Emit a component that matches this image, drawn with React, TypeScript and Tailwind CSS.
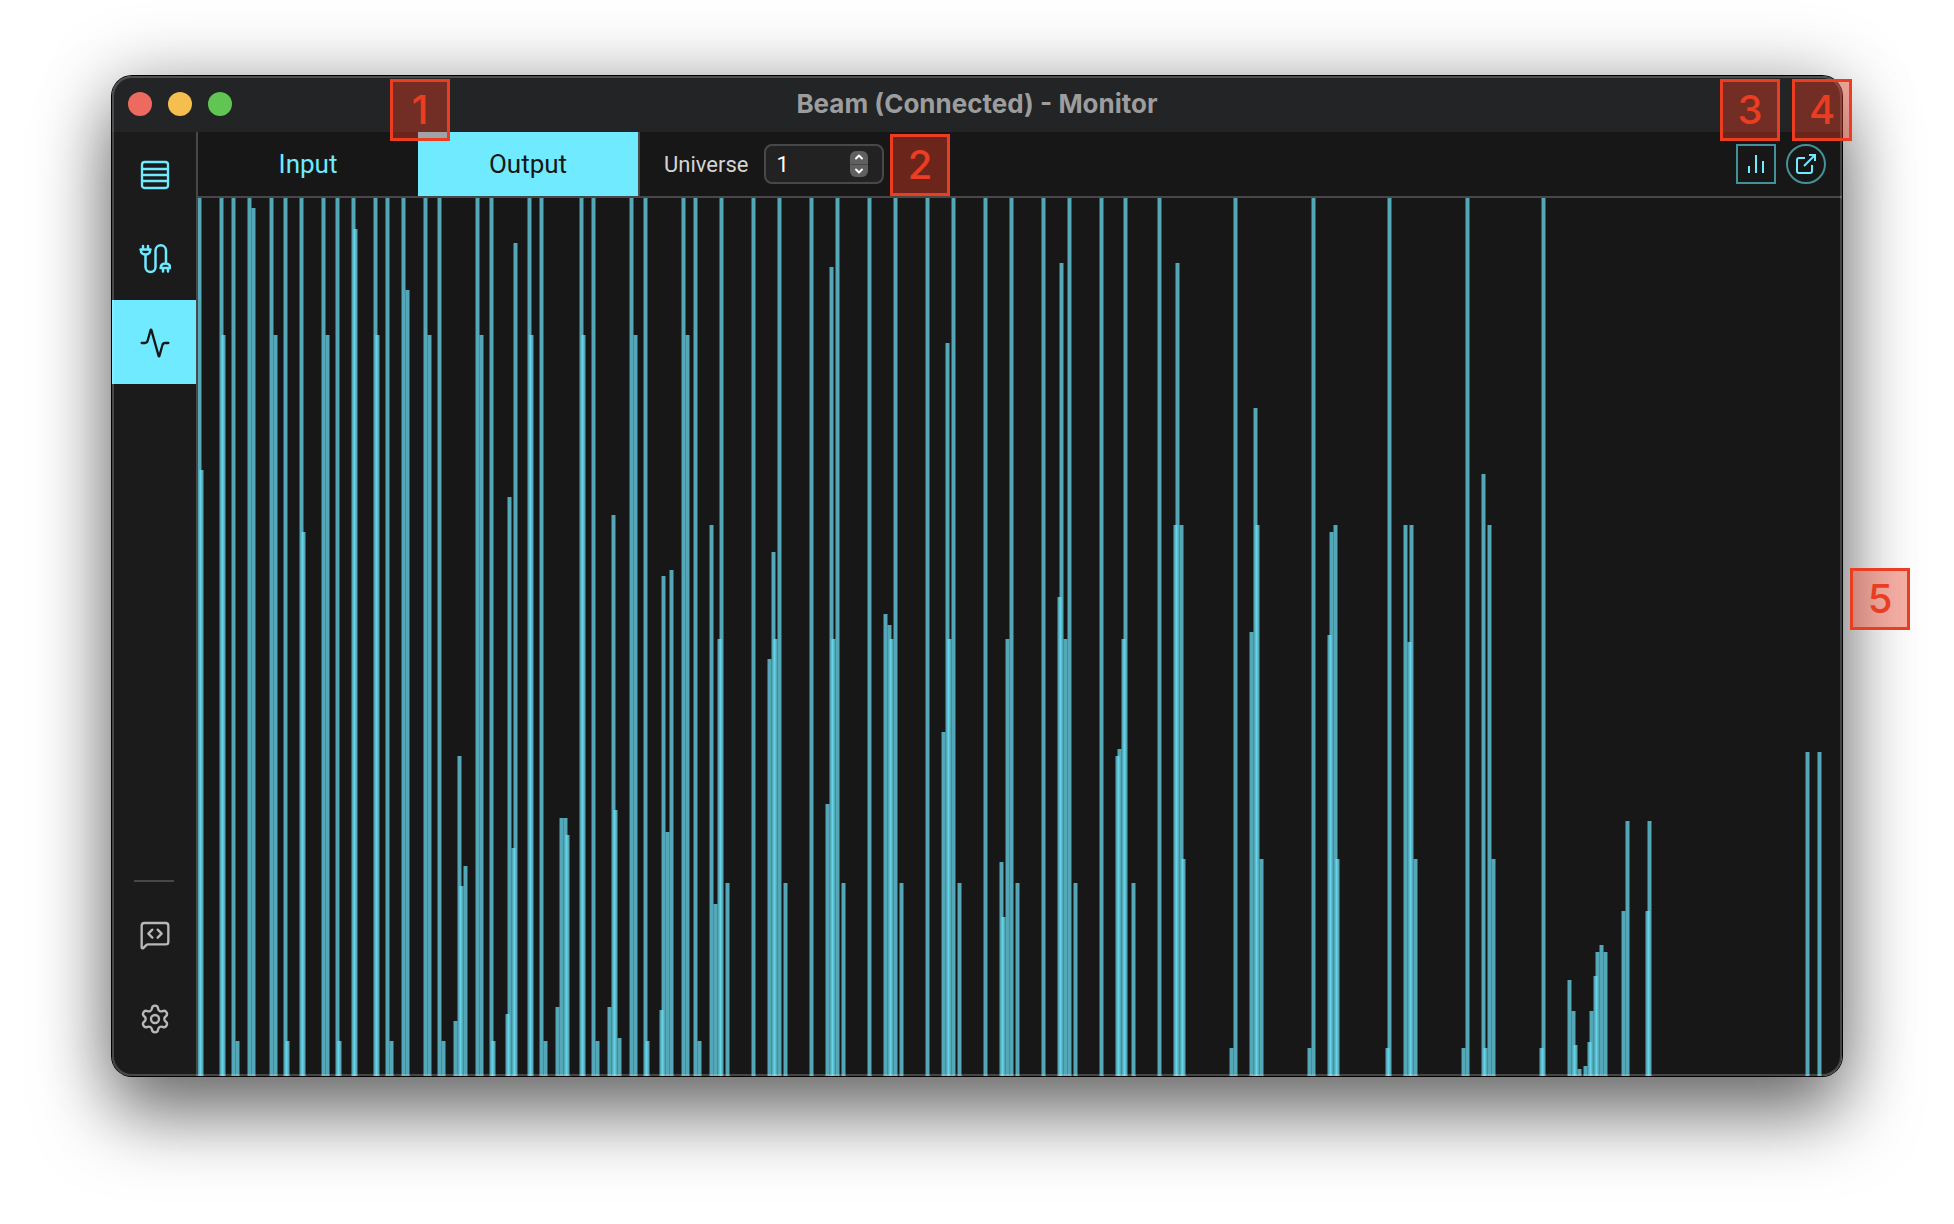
import { useState, type CSSProperties, type ReactNode } from "react";
import { Activity, ChevronDown, ChevronUp, MessageSquareCode, Settings, ExternalLink } from "lucide-react";

// Each entry: [left edge, top edge] of a channel bar, in chart units.
const FULL = 0;
const BARS: [number, number][] = [
  [0, FULL], [2, 272], [22, FULL], [24, 137], [34, FULL], [38, 843], [50, FULL], [54, 10],
  [72, FULL], [76, 137], [86, FULL], [88, 843], [102, FULL], [104, 334], [124, FULL], [128, 137],
  [138, FULL], [140, 843], [154, FULL], [156, 31], [176, FULL], [178, 137], [188, FULL], [192, 843],
  [204, FULL], [208, 92], [226, FULL], [230, 137], [240, FULL], [244, 843],
  [256, 823], [260, 558], [262, 688], [266, 668], [278, FULL], [282, 137], [292, FULL], [294, 843],
  [308, 816], [310, 299], [314, 650], [316, 45], [330, FULL], [332, 137], [342, FULL], [346, 843],
  [358, 809], [362, 620], [366, 620], [368, 637], [382, FULL], [384, 137], [394, FULL], [398, 843],
  [410, 809], [414, 317], [416, 612], [420, 840], [432, FULL], [436, 137], [446, FULL], [448, 843],
  [462, 812], [464, 378], [468, 634], [472, 372], [484, FULL], [488, 137], [496, FULL], [500, 843],
  [512, 327], [516, 706], [520, 441], [522, FULL], [528, 685], [554, FULL],
  [570, 461], [574, 354], [576, 441], [580, FULL], [586, 685], [612, FULL],
  [628, 606], [632, 69], [634, 441], [638, FULL], [644, 685], [670, FULL],
  [686, 416], [690, 427], [692, 441], [696, FULL], [702, 685], [728, FULL],
  [744, 534], [748, 145], [750, 441], [754, FULL], [760, 685], [786, FULL],
  [802, 664], [804, 719], [808, 441], [812, FULL], [818, 685], [844, FULL],
  [860, 399], [862, 65], [866, 441], [870, FULL], [876, 685], [902, FULL],
  [918, 558], [920, 551], [924, 441], [926, FULL], [934, 685], [960, FULL],
  [976, 327], [978, 65], [982, 327], [984, 661], [1032, 850], [1036, FULL],
  [1052, 434], [1056, 210], [1058, 327], [1062, 661], [1110, 850], [1114, FULL],
  [1130, 437], [1132, 334], [1136, 327], [1138, 661], [1188, 850], [1190, FULL],
  [1206, 327], [1210, 444], [1212, 327], [1216, 661], [1264, 850], [1268, FULL],
  [1284, 276], [1286, 850], [1290, 327], [1294, 661], [1342, 850], [1344, FULL],
  [1370, 782], [1374, 813], [1376, 847], [1380, 871], [1386, 868], [1390, 844], [1392, 813],
  [1396, 778], [1398, 754], [1402, 747], [1406, 754], [1424, 713], [1428, 623],
  [1448, 713], [1450, 623], [1608, 554], [1620, 554],
];

function ChannelChart() {
  return (
    <svg
      role="img"
      aria-label="Channel levels"
      viewBox="0 0 1644 878"
      preserveAspectRatio="none"
      className="block h-full w-full"
      fill="#6feaff"
    >
      {BARS.map(([x, y]) => (
        <g key={x}>
          <rect x={x - 1} y={y} width={5} height={878 - y} opacity={0.34} />
          <rect x={x} y={y} width={3} height={878 - y} opacity={0.52} />
        </g>
      ))}
    </svg>
  );
}

const ListIcon = () => (
  <svg viewBox="0 0 24 24" className="size-8" fill="none" stroke="currentColor" strokeWidth={1.75} strokeLinecap="round" strokeLinejoin="round">
    <rect x="2.250" y="2.250" width="19.500" height="19.500" rx="2" />
    <path d="M2.250 7.500h19.500M2.250 12h19.500M2.250 16.500h19.500" />
  </svg>
);

const CableIcon = () => (
  <svg viewBox="0 0 32 32" className="size-8" fill="none" stroke="currentColor" strokeWidth={2.5} strokeLinecap="round" strokeLinejoin="round">
    <path d="M4 3v3.500M9 3v3.500M1.500 6.500h10M2 6.500v1.500a4.500 3.500 0 0 0 9 0V6.500" />
    <path d="M6.500 12V24a5 5 0 0 0 10 0V7.500a5.250 5.250 0 0 1 10.500 0V19" />
    <path d="M22 25v-2a4.750 3.750 0 0 1 9 0V25M21.500 25h10M24 25v3.500M29 25v3.500" />
  </svg>
);

function NavButton({ label, active, muted, children }: { label: string; active?: boolean; muted?: boolean; children: ReactNode }) {
  const tone = active ? "bg-[#6feaff] text-[#171717]" : muted ? "text-[#b8b8b8]" : "text-[#6feaff]";
  return (
    <button type="button" aria-label={label} className={`flex h-21 w-full items-center justify-center pt-0.5 pl-0.5 ${tone}`}>
      {children}
    </button>
  );
}

function Marker({ n, style }: { n: number; style: CSSProperties }) {
  return (
    <span
      style={style}
      className="absolute z-10 flex h-[62px] w-[60px] items-center justify-center border-3 border-[#ea3d22] bg-[#ea3d22]/40 font-['Inter'] text-[40px] font-medium text-[#ea3d22]"
    >
      {n}
    </span>
  );
}

export default function App() {
  const [universe, setUniverse] = useState(1);
  return (
    <div className="h-screen overflow-hidden bg-white px-28 pt-19 pb-37 font-['Roboto',sans-serif]">
      <div className="relative h-full rounded-[20px] shadow-[0_0_0_1px_#000,0_40px_72px_rgba(0,0,0,0.5),0_0_72px_rgba(0,0,0,0.25)]">
        <div className="flex h-full flex-col overflow-hidden rounded-[20px] bg-[#171717]">
          <header className="grid h-14 shrink-0 grid-cols-3 items-center bg-[#222425] px-4">
            <div className="flex gap-4">
              <button type="button" aria-label="Close" className="size-6 rounded-full bg-[#ed6a5e]" />
              <button type="button" aria-label="Minimize" className="size-6 rounded-full bg-[#f5bf4f]" />
              <button type="button" aria-label="Zoom" className="size-6 rounded-full bg-[#61c554]" />
            </div>
            <h1 className="pb-0.5 text-center font-['Inter'] text-[26px] font-bold whitespace-nowrap text-[#9d9d9e]">
              Beam (Connected) - Monitor
            </h1>
          </header>
          <div className="flex min-h-0 flex-1">
            <nav className="flex w-[86px] shrink-0 flex-col items-center border-r-2 border-[#484848] bg-[#1b1b1b] pb-4">
              <NavButton label="Patch"><ListIcon /></NavButton>
              <NavButton label="Connections"><CableIcon /></NavButton>
              <NavButton label="Monitor" active><Activity className="size-8" strokeWidth={1.75} /></NavButton>
              <hr className="mt-auto mb-2.5 w-10 border-t-2 border-[#484848]" />
              <NavButton label="Console" muted><MessageSquareCode className="size-8" strokeWidth={1.75} /></NavButton>
              <NavButton label="Settings" muted><Settings className="size-8" strokeWidth={1.75} /></NavButton>
            </nav>
            <main className="flex min-w-0 flex-1 flex-col">
              <div className="flex h-[66px] shrink-0 items-center border-b-2 border-[#484848] pr-4">
                <div role="tablist" className="flex h-full border-r-2 border-[#484848] text-[26px]">
                  <button type="button" role="tab" aria-selected={false} className="h-full w-55 text-[#6feaff]">Input</button>
                  <button type="button" role="tab" aria-selected className="h-full w-55 bg-[#6feaff] text-[#171717]">Output</button>
                </div>
                <label htmlFor="universe" className="ml-6 text-[22px] text-[#d4d4d4]">Universe</label>
                <div className="ml-4 flex h-10 w-30 items-center justify-between rounded-lg border-2 border-[#484848] bg-[#222] pr-3.5 pl-2.5">
                  <input
                    id="universe"
                    inputMode="numeric"
                    value={universe}
                    onChange={(e) => setUniverse(Number(e.target.value) || 1)}
                    className="w-12 bg-transparent text-[22px] text-white outline-none"
                  />
                  <div className="flex h-[26px] w-[18px] flex-col overflow-hidden rounded-md bg-[#606060] text-white">
                    <button type="button" aria-label="Increase" onClick={() => setUniverse(universe + 1)} className="flex flex-1 items-center justify-center border-b border-[#484848]">
                      <ChevronUp className="size-3" strokeWidth={4} />
                    </button>
                    <button type="button" aria-label="Decrease" onClick={() => setUniverse(Math.max(1, universe - 1))} className="flex flex-1 items-center justify-center">
                      <ChevronDown className="size-3" strokeWidth={4} />
                    </button>
                  </div>
                </div>
                <div className="ml-auto flex gap-2.5 text-[#6feaff]">
                  <button type="button" aria-label="Bar view" className="flex size-10 items-center justify-center border-2 border-[#459199]">
                    <svg viewBox="0 0 20 20" className="size-5" stroke="currentColor" strokeWidth={2}>
                      <path d="M3 12v7M10 1v18M17 7v12" />
                    </svg>
                  </button>
                  <button type="button" aria-label="Open in new window" className="flex size-10 items-center justify-center rounded-full border-2 border-[#459199]">
                    <ExternalLink className="size-6" strokeWidth={2} strokeLinecap="butt" strokeLinejoin="miter" />
                  </button>
                </div>
              </div>
              <div className="min-h-0 flex-1"><ChannelChart /></div>
            </main>
          </div>
        </div>
        <div className="pointer-events-none absolute inset-0 rounded-[20px] border-2 border-white/20" />
        <Marker n={1} style={{ left: 278, top: 3 }} />
        <Marker n={2} style={{ left: 778, top: 58 }} />
        <Marker n={3} style={{ right: 62, top: 3 }} />
        <Marker n={4} style={{ right: -10, top: 3 }} />
        <Marker n={5} style={{ right: -68, top: 492 }} />
      </div>
    </div>
  );
}
